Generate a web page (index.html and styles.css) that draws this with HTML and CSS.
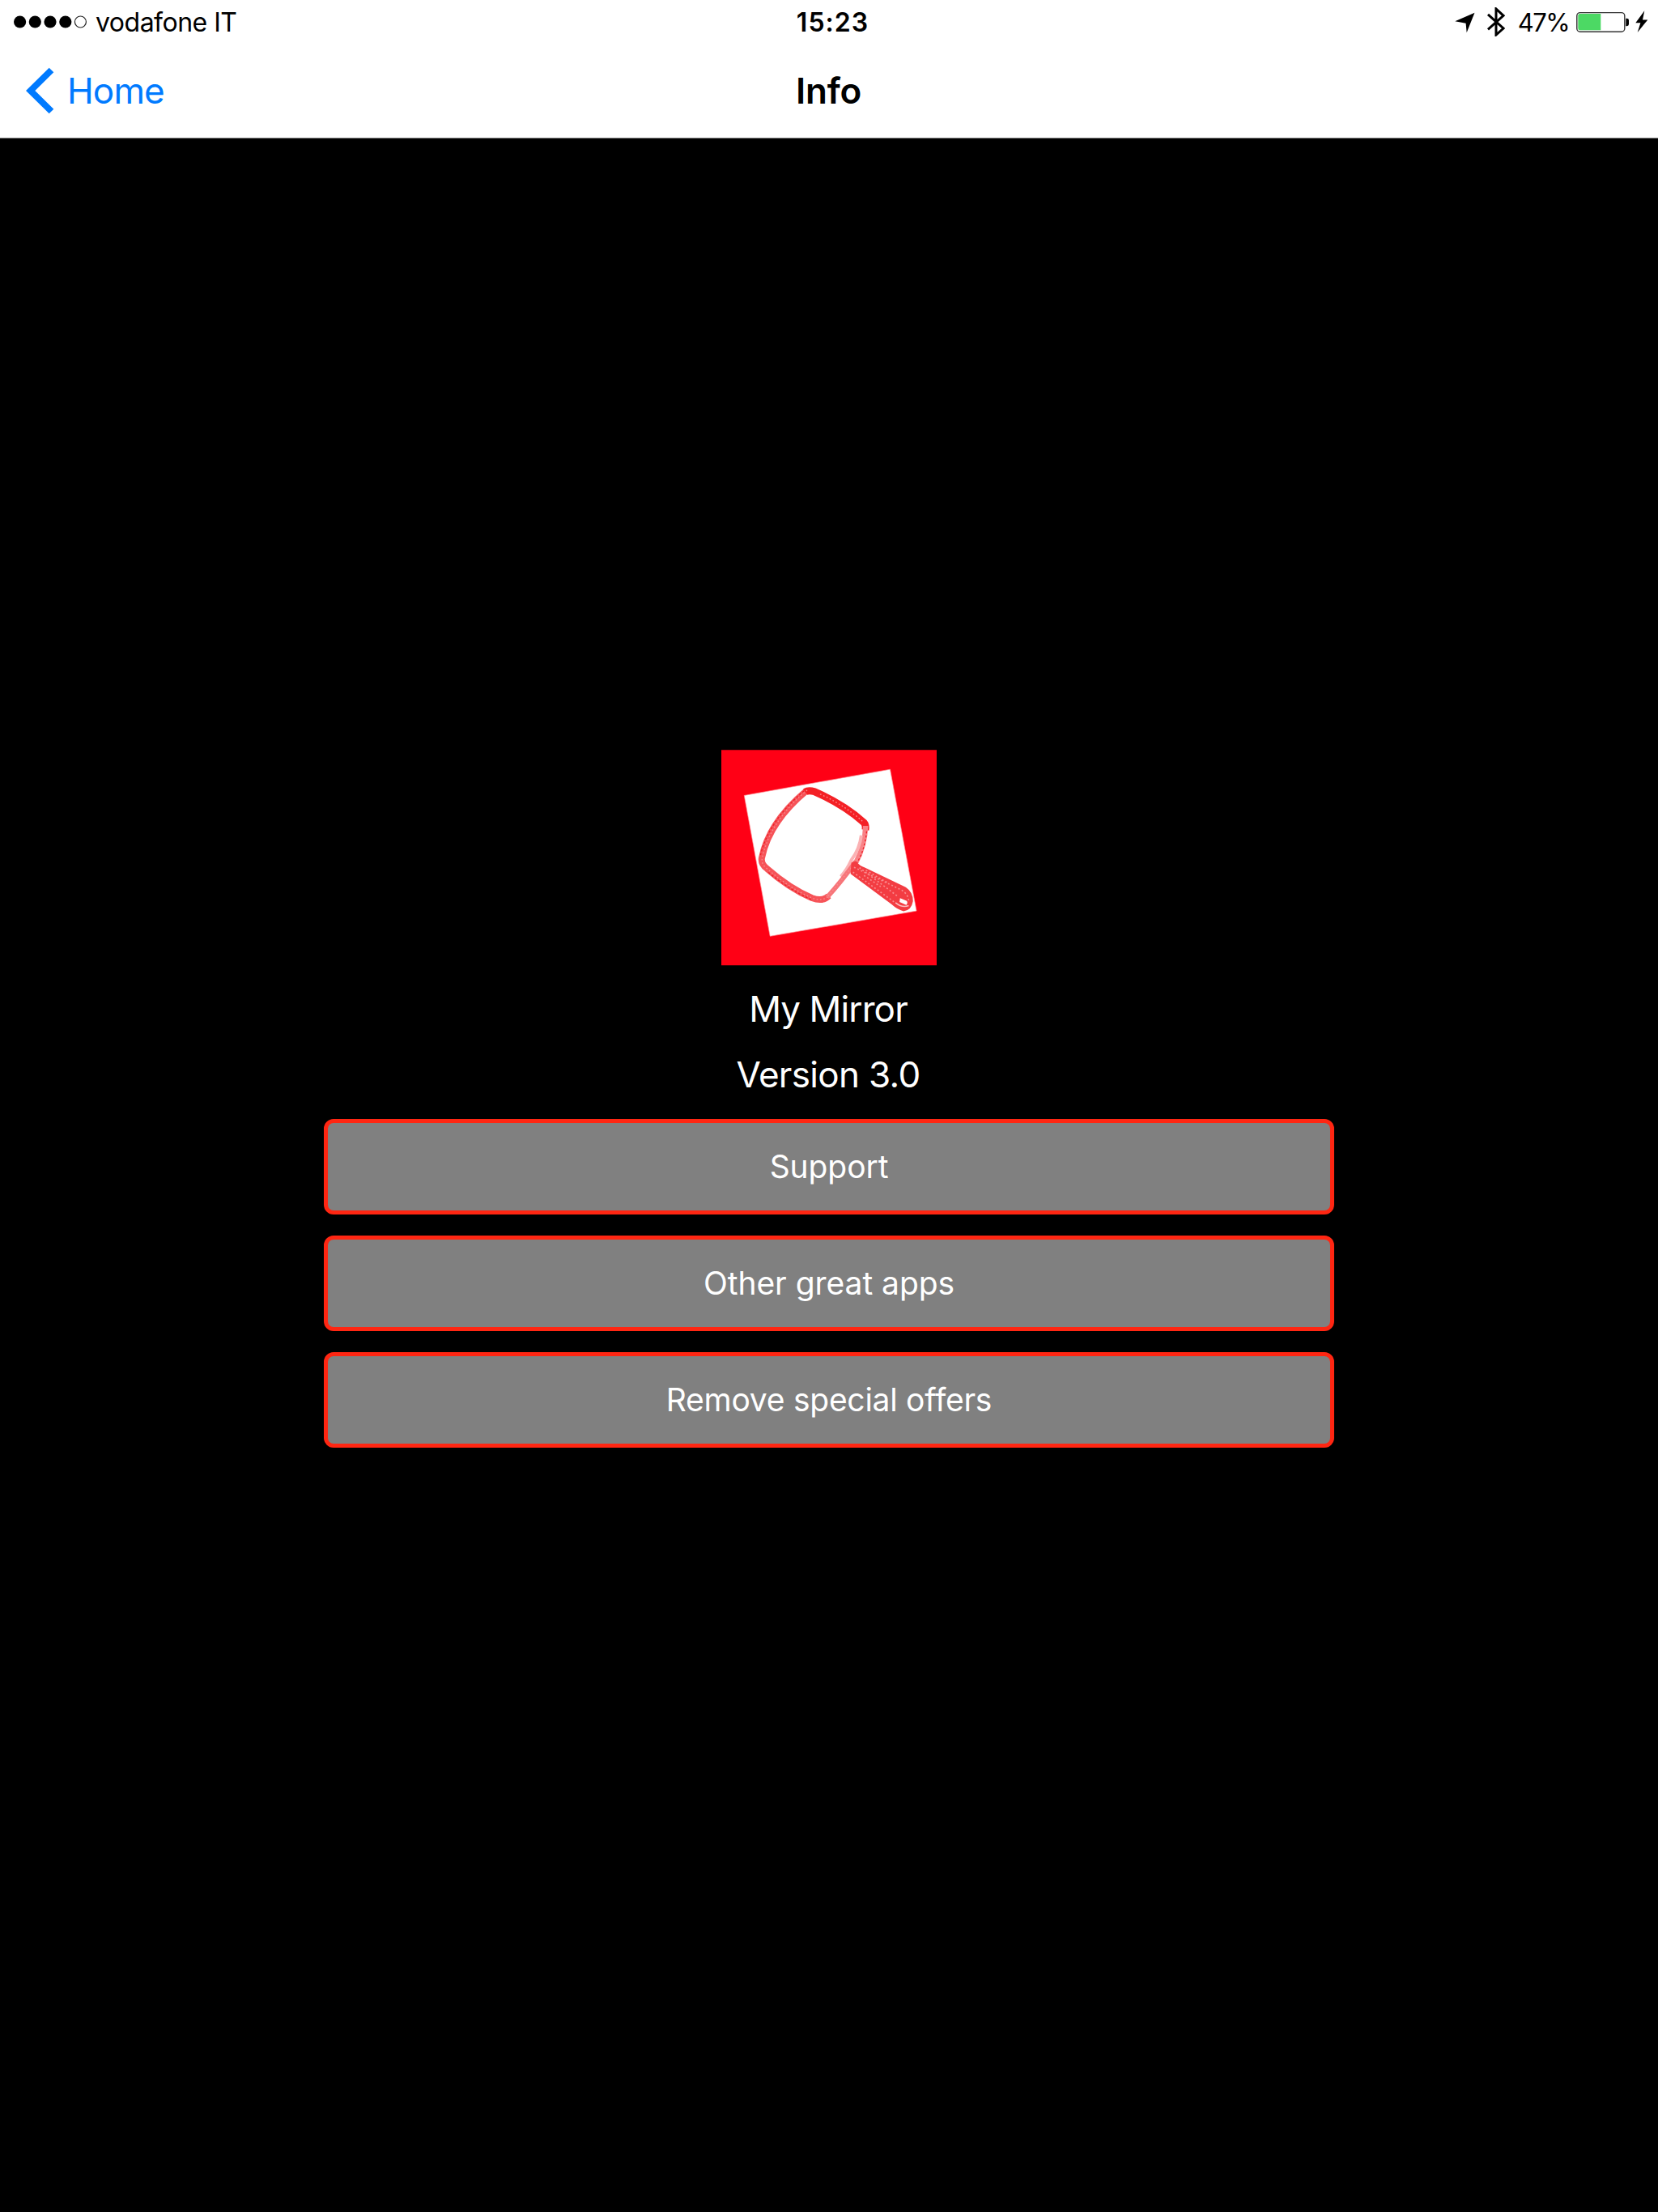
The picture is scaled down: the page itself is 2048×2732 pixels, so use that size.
FILE: index.html
```html
<!DOCTYPE html>
<html lang="en">
<head>
<meta charset="utf-8">
<title>Info</title>
<link rel="stylesheet" href="styles.css">
</head>
<body>
<header class="header">
  <div class="status">
    <div class="carrier">
      <svg class="signal" viewBox="17 19 90 16" aria-hidden="true">
        <circle cx="24.6" cy="27" r="7.6"/><circle cx="43.3" cy="27" r="7.6"/><circle cx="62" cy="27" r="7.6"/><circle cx="80.8" cy="27" r="7.6"/>
        <circle cx="99.4" cy="27" r="7" fill="none" stroke="#222" stroke-width="1.2"/>
      </svg>
      <span class="carrier-name">vodafone IT</span>
    </div>
    <time class="clock">15:23</time>
    <div class="indicators">
      <svg class="radios" viewBox="1797 9 62 36" aria-hidden="true">
        <path d="M1821.5 15.7 1811.7 40.3 1810.6 28.8 1797.3 26.2Z"/>
        <path d="M1838 17.8 1857 35 1848 43V11L1857 19.3 1838 36.3" fill="none" stroke="#000" stroke-width="3"/>
      </svg>
      <span class="percent">47%</span>
      <svg class="battery" viewBox="1947 13 89 28" aria-hidden="true">
        <rect x="1947.8" y="15.6" width="59" height="23.6" rx="4" fill="#fff" stroke="#333" stroke-width="1.4"/>
        <path d="M1951.500 17H1977.3V37.3H1951.5Q1949.3 37.3 1949.3 35V19.3Q1949.3 17 1951.5 17Z" fill="#4cd964"/>
        <path d="M2008.3 22.7H2009.5Q2012 22.7 2012 25V29.8Q2012 32.2 2009.5 32.2H2008.3Z"/>
        <path d="M2031.3 13.3 2020.3 28.3H2026.4L2022.7 40 2035.3 24.4H2029Z"/>
      </svg>
    </div>
  </div>
  <nav class="nav">
    <a class="back">
      <svg class="chevron" viewBox="33 83 35 58" aria-hidden="true"><path d="M64.500 86.500 38.700 112 64.500 137.500" fill="none" stroke="#007aff" stroke-width="8"/></svg>
      <span class="back-label">Home</span>
    </a>
    <h1 class="title">Info</h1>
    <span></span>
  </nav>
</header>
<main class="content">
  <svg class="logo" viewBox="33 33 800 800" role="img" aria-label="My Mirror">
    <path fill="#ff0015" d="M33 33h800v800H33z"/>
    <path fill="#fff" stroke="#ff9a9f" stroke-width="2" d="M118 202 660 105 758 631 214 725Z"/>
    <g fill="none" stroke-linejoin="round">
      <path stroke="#f65358" stroke-width="24" d="M350 184Q210 300 183 435Q180 457 203 474Q285 546 370 583Q410 598 432 575"/>
      <path stroke="#f42025" stroke-width="27" d="M345 189Q356 181 380 188Q490 237 563 303Q571 313 568 330"/>
      <path stroke="#f98185" stroke-width="19" d="M569 315Q567 388 532 453"/>
      <path stroke="#fbb2b4" stroke-width="12" d="M553 350Q547 400 517 440Q500 478 477 503"/>
      <path stroke="#f77579" stroke-width="17" d="M532 448Q475 527 426 580"/>
      <path stroke="#f98b8f" stroke-width="4" stroke-dasharray="5 8" d="M352 182Q212 300 185 435Q180 457 203 474Q285 546 370 583Q410 598 432 575M400 197Q490 237 563 303M565 340Q562 405 530 453L427 579"/>
      <path stroke="#ec2027" stroke-width="4" stroke-dasharray="8 7" d="M340 185Q205 300 177 430M208 488Q285 552 370 590M573 335Q565 410 535 455"/>
    </g>
    <path fill="#f33c42" d="M516 452 532 446Q548 465 566 470L718 543Q746 562 745 595Q739 630 710 632Q686 626 666 607L513 493Z"/>
    <path fill="none" stroke="#f98b8f" stroke-width="5" stroke-dasharray="6 8" d="M526 469 700 552Q731 570 729 600M522 487 681 602M546 470 690 578M570 480 655 529M563 499 625 541"/>
    <path fill="#fff" d="M697 583 722 594Q727 602 720 609L695 598Z"/>
    <path fill="none" stroke="#fbc0c2" stroke-width="5" d="M680 600Q706 621 729 611"/>
  </svg>
  <p class="app-name">My Mirror</p>
  <p class="version">Version 3.0</p>
  <div class="actions">
    <button class="action support">Support</button>
    <button class="action apps">Other great apps</button>
    <button class="action offers">Remove special offers</button>
  </div>
</main>
</body>
</html>
```
FILE: styles.css
```css
* { box-sizing: border-box; }
body {
  margin: 0;
  min-height: 2732px;
  display: flex;
  flex-direction: column;
  background: #000;
  color: #000;
  font-family: Inter, "Liberation Sans", sans-serif;
}
svg { display: block; flex: none; }
.header {
  height: 171px;
  background: #fff;
  border-bottom: 1px solid #8a8a8a;
}
.status, .nav {
  display: grid;
  grid-template-columns: 1fr auto 1fr;
  align-items: center;
}
.status {
  height: 54px;
  padding: 0 12px 0 17px;
  font-size: 32px;
  line-height: 52px;
}
.carrier, .indicators, .back { display: flex; align-items: center; }
.carrier-name, .clock, .percent { padding-top: 2px; }
.signal { width: 90px; height: 16px; }
.carrier-name { margin-left: 11px; letter-spacing: -0.5px; }
.clock { font-weight: 600; letter-spacing: 1.05px; margin-left: 4px; }
.indicators { justify-content: flex-end; }
.radios { width: 62px; height: 36px; }
.percent { margin: 0 9px 0 16px; font-size: 31px; letter-spacing: -1.6px; }
.battery { width: 89px; height: 28px; }
.nav {
  height: 116px;
  padding: 0 33px 0 32px;
  font-size: 44px;
  line-height: 116px;
}
.back { color: #007aff; }
.chevron { width: 35px; height: 58px; }
.back-label { margin-left: 16px; letter-spacing: -0.85px; }
.title { margin: 0; font-size: 44px; font-weight: 600; letter-spacing: -0.22px; }
.content {
  flex: 1;
  display: flex;
  flex-direction: column;
  align-items: center;
  padding-top: 755px;
  color: #fff;
}
.logo { width: 266px; height: 266.5px; margin-bottom: 13.5px; }
.app-name, .version { margin: 0; padding-right: 2px; font-size: 44px; line-height: 81px; }
.app-name { letter-spacing: -0.87px; }
.version { letter-spacing: -0.67px; }
.actions {
  width: 1248px;
  margin-top: 14px;
  display: flex;
  flex-direction: column;
  gap: 26px;
}
.action {
  height: 118px;
  padding: 0;
  border: 5px solid #ff2612;
  border-radius: 12px;
  background: #808080;
  color: #fff;
  font: 400 39px/108px Inter, "Liberation Sans", sans-serif;
}
.support { letter-spacing: -0.09px; }
.apps { letter-spacing: -0.05px; }
.offers { letter-spacing: -0.26px; }
```
